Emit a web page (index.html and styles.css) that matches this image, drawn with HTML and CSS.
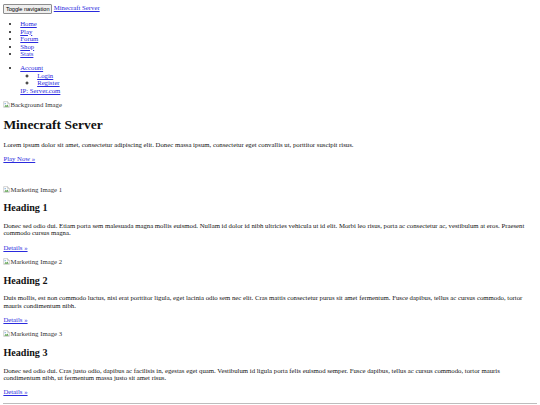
FILE: index.html
```html
<!DOCTYPE html>
<html lang="en">
<head>
<meta charset="utf-8">
<title>Minecraft Server</title>
<link rel="stylesheet" href="styles.css">
</head>
<body>
<nav class="navbar">
  <div class="navbar-header">
    <button type="button" class="navbar-toggle">Toggle navigation</button>
    <a href="#" class="brand">Minecraft Server</a>
  </div>
  <ul class="nav">
    <li><a href="#">Home</a></li>
    <li><a href="#">Play</a></li>
    <li><a href="#">Forum</a></li>
    <li><a href="#">Shop</a></li>
    <li><a href="#">Stats</a></li>
  </ul>
  <ul class="nav">
    <li><a href="#">Account</a>
      <ul class="sub">
        <li><a href="#">Login</a></li>
        <li><a href="#">Register</a></li>
      </ul>
      <a href="#">IP: Server.com</a>
    </li>
  </ul>
</nav>
<div class="jumbotron">
  <span class="broken"><svg class="icon" viewBox="0 0 16 16" width="7" height="7"><path d="M1.5 1.5h9l4 4v9h-13z" fill="#fff" stroke="#999"/><path d="M10.5 1.5v4h4" fill="#eee" stroke="#999"/><path d="M3 13l3-4 2 2 2-3 3 5z" fill="#5a9e4b"/><circle cx="5" cy="6" r="1.5" fill="#6aa0d8"/></svg>Background Image</span>
  <h1>Minecraft Server</h1>
  <p>Lorem ipsum dolor sit amet, consectetur adipiscing elit. Donec massa ipsum, consectetur eget convallis ut, porttitor suscipit risus.</p>
  <p><a href="#">Play Now &raquo;</a></p>
</div>
<div class="marketing">
  <div class="col">
    <span class="broken"><svg class="icon" viewBox="0 0 16 16" width="7" height="7"><path d="M1.5 1.5h9l4 4v9h-13z" fill="#fff" stroke="#999"/><path d="M10.5 1.5v4h4" fill="#eee" stroke="#999"/><path d="M3 13l3-4 2 2 2-3 3 5z" fill="#5a9e4b"/><circle cx="5" cy="6" r="1.5" fill="#6aa0d8"/></svg>Marketing Image 1</span>
    <h2>Heading 1</h2>
    <p>Donec sed odio dui. Etiam porta sem malesuada magna mollis euismod. Nullam id dolor id nibh ultricies vehicula ut id elit. Morbi leo risus, porta ac consectetur ac, vestibulum at eros. Praesent commodo cursus magna.</p>
    <p><a href="#">Details &raquo;</a></p>
  </div>
  <div class="col">
    <span class="broken"><svg class="icon" viewBox="0 0 16 16" width="7" height="7"><path d="M1.5 1.5h9l4 4v9h-13z" fill="#fff" stroke="#999"/><path d="M10.5 1.5v4h4" fill="#eee" stroke="#999"/><path d="M3 13l3-4 2 2 2-3 3 5z" fill="#5a9e4b"/><circle cx="5" cy="6" r="1.5" fill="#6aa0d8"/></svg>Marketing Image 2</span>
    <h2>Heading 2</h2>
    <p>Duis mollis, est non commodo luctus, nisi erat porttitor ligula, eget lacinia odio sem nec elit. Cras mattis consectetur purus sit amet fermentum. Fusce dapibus, tellus ac cursus commodo, tortor mauris condimentum nibh.</p>
    <p><a href="#">Details &raquo;</a></p>
  </div>
  <div class="col">
    <span class="broken"><svg class="icon" viewBox="0 0 16 16" width="7" height="7"><path d="M1.5 1.5h9l4 4v9h-13z" fill="#fff" stroke="#999"/><path d="M10.5 1.5v4h4" fill="#eee" stroke="#999"/><path d="M3 13l3-4 2 2 2-3 3 5z" fill="#5a9e4b"/><circle cx="5" cy="6" r="1.5" fill="#6aa0d8"/></svg>Marketing Image 3</span>
    <h2>Heading 3</h2>
    <p>Donec sed odio dui. Cras justo odio, dapibus ac facilisis in, egestas eget quam. Vestibulum id ligula porta felis euismod semper. Fusce dapibus, tellus ac cursus commodo, tortor mauris condimentum nibh, ut fermentum massa justo sit amet risus.</p>
    <p><a href="#">Details &raquo;</a></p>
  </div>
  <hr class="rule">
</div>
</body>
</html>
```
FILE: styles.css
```css
body {
  margin: 3.375px;
  font-family: "Liberation Serif", "Times New Roman", serif;
  font-size: 6.75px;
  line-height: 1.111;
  color: #111;
  background: #fff;
}
a {
  color: #2a2add;
}
.navbar-header {
  line-height: 10px;
}
.navbar-toggle {
  font-family: "Liberation Sans", Arial, sans-serif;
  font-size: 5.625px;
  line-height: 1.15;
  padding: 0.5px 1.5px;
  margin: 0;
  border: 1px solid #8d8d8d;
  border-radius: 1px;
  background: #efefef;
  color: #000;
  vertical-align: middle;
}
.nav {
  margin: 6.75px 0;
  padding-left: 16.875px;
}
.nav .sub {
  margin: 0;
  padding-left: 16.875px;
  list-style-type: circle;
}
.broken {
  line-height: 8.4px;
  color: #333;
}
.icon {
  vertical-align: -1px;
}
h1 {
  font-size: 13.5px;
  margin: 7.5px 0 9px;
}
h2 {
  font-size: 10.125px;
  margin: 8.4px 0;
}
p {
  margin: 6.75px 0;
}
.jumbotron {
  padding-bottom: 16px;
}
.rule {
  margin: 3.375px 0;
  border: 0;
  border-top: 1px solid #bdbdbd;
}
```
